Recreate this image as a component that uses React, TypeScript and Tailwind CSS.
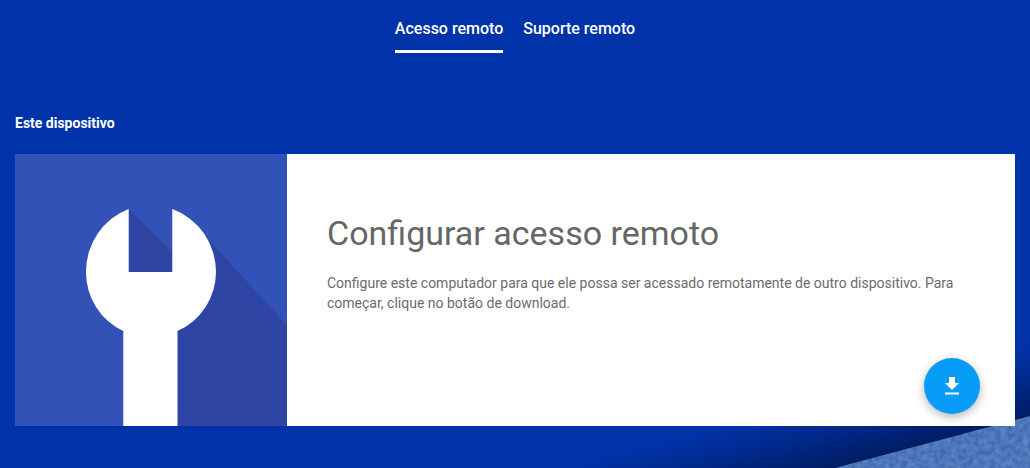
const roboto = "font-['Roboto','Liberation_Sans',sans-serif]";

function BackgroundBand() {
  return (
    <svg
      className="absolute bottom-0 right-0 h-[140px] w-[440px]"
      viewBox="0 0 440 140"
      aria-hidden="true"
    >
      <defs>
        <linearGradient id="bandShade" gradientUnits="userSpaceOnUse" x1="245" y1="140" x2="227" y2="72">
          <stop offset="0" stopColor="#001a5c" stopOpacity="0.9" />
          <stop offset="0.5" stopColor="#001a5c" stopOpacity="0.42" />
          <stop offset="1" stopColor="#001a5c" stopOpacity="0" />
        </linearGradient>
        <filter id="bandGrain" x="0" y="0" width="100%" height="100%">
          <feTurbulence type="fractalNoise" baseFrequency="0.18" numOctaves="2" seed="4" />
          <feColorMatrix values="0 0 0 0 0.55  0 0 0 0 0.68  0 0 0 0 0.88  0.3 0 0 0 -0.08" />
          <feComposite in2="SourceAlpha" operator="in" />
          <feMerge>
            <feMergeNode in="SourceGraphic" />
            <feMergeNode />
          </feMerge>
        </filter>
      </defs>
      <rect width="440" height="140" fill="url(#bandShade)" />
      <polygon points="245,140 440,88 440,140" fill="#3a6ab6" filter="url(#bandGrain)" />
    </svg>
  );
}

function WrenchArt() {
  return (
    <svg className="h-[272px] w-[272px] shrink-0" viewBox="0 0 272 272" aria-hidden="true">
      <rect width="272" height="272" fill="#3352b8" />
      <polygon points="113.5,55 157,98 157,118 113.5,118" fill="#2e45a4" />
      <polygon points="190,82 272,171 272,272 162,272 162,170" fill="#2e45a4" />
      <path
        d="M113.7 55 A65 67 0 0 0 71 118 A65 65 0 0 0 108.3 177 L108.3 272 L162.5 272 L162.5 177 A65 65 0 0 0 201 118 A65 67 0 0 0 157.3 55 L157.3 118 L113.7 118 Z"
        fill="#ffffff"
      />
    </svg>
  );
}

export default function App() {
  return (
    <div className={`relative h-[468px] w-[1030px] overflow-hidden bg-[#0033aa] ${roboto}`}>
      <BackgroundBand />

      <nav className="relative flex h-[53px] justify-center gap-5 text-base font-medium text-white">
        <a className="flex items-center border-b-[3px] border-white pt-[7px]">Acesso remoto</a>
        <a className="flex items-center border-b-[3px] border-transparent pt-[7px]">Suporte remoto</a>
      </nav>

      <main className="relative px-[15px]">
        <h2 className="mt-[62px] text-sm leading-4 font-bold text-white">Este dispositivo</h2>

        <section className="mt-[23px] flex h-[272px] bg-white">
          <WrenchArt />
          <div className="relative flex-1 pl-10 pr-[50px] pt-[57px]">
            <h1 className="text-[34px] leading-[44px] text-[#666666]">Configurar acesso remoto</h1>
            <p className="mt-[18px] text-sm leading-[20px] text-[#6b6b6b]">
              Configure este computador para que ele possa ser acessado remotamente de outro dispositivo. Para
              começar, clique no botão de download.
            </p>
            <button className="absolute bottom-3 right-[35px] flex h-14 w-14 items-center justify-center rounded-full bg-[#069cf7] shadow-[0_3px_10px_rgba(0,0,0,0.3)]">
              <svg className="h-6 w-6" viewBox="0 0 24 24" fill="#ffffff" aria-hidden="true">
                <path d="M19 9h-4V3H9v6H5l7 7 7-7zM5 18.5h14v2H5z" />
              </svg>
            </button>
          </div>
        </section>
      </main>
    </div>
  );
}
